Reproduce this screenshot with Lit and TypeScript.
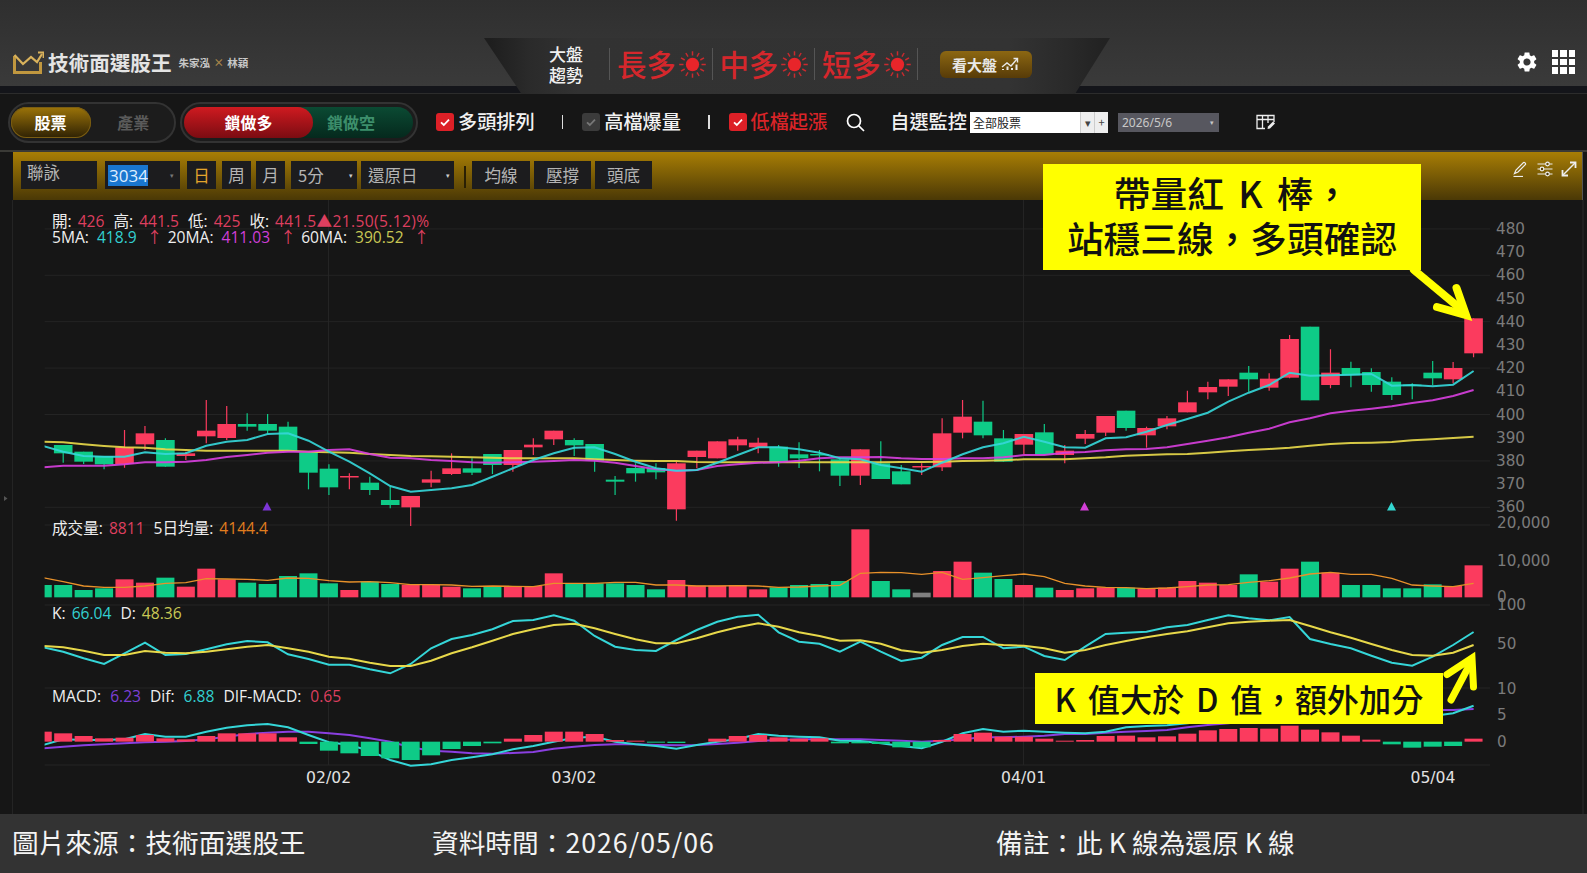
import { LitElement, html, svg, css } from "lit";
import { customElement } from "lit/decorators.js";

const RED = "#fb3b5e";
const GREEN = "#0ecb87";
const xAt = (i: number) => 63.2 + 20.44 * i;
const yOf = (y0: number) => (z: number) => y0 + z / 3;

// [color, wickTop, bodyTop, bodyBottom, wickBottom], values read per pane section
type Candle = ["r" | "g", number, number, number, number];
const candlesA: Candle[] = [
	["g", 735, 735, 760, 788], ["g", 755, 755, 785, 792], ["g", 768, 768, 793, 808], ["r", 690, 742, 792, 803],
	["r", 678, 700, 733, 750], ["g", 715, 720, 800, 800], ["r", 755, 760, 768, 780], ["r", 600, 692, 709, 730],
	["r", 618, 672, 714, 720], ["g", 640, 672, 680, 692], ["g", 642, 672, 692, 700], ["g", 665, 680, 752, 755],
	["g", 757, 757, 818, 868], ["g", 793, 806, 862, 885], ["r", 820, 828, 830, 868], ["g", 830, 848, 870, 885],
	["g", 860, 900, 915, 925], ["r", 888, 888, 922, 978], ["r", 812, 838, 848, 862], ["r", 760, 805, 822, 825],
	["g", 775, 805, 818, 825], ["g", 762, 762, 795, 822], ["r", 750, 750, 795, 815],
];
const candlesB: Candle[] = [
	["r", 325, 344, 352, 375], ["r", 302, 302, 328, 345], ["g", 325, 330, 346, 378], ["g", 342, 342, 392, 425],
	["g", 438, 449, 455, 495], ["g", 400, 414, 430, 455], ["g", 400, 414, 427, 448], ["r", 395, 400, 538, 572],
	["r", 362, 362, 381, 415], ["r", 334, 334, 385, 385], ["r", 320, 328, 346, 362], ["r", 323, 338, 352, 370],
	["g", 345, 350, 398, 410], ["g", 337, 373, 385, 414], ["g", 360, 372, 376, 424], ["g", 385, 388, 437, 468],
	["r", 358, 358, 437, 465], ["g", 334, 400, 447, 447], ["g", 405, 424, 463, 463], ["r", 400, 408, 410, 435],
	["r", 265, 310, 412, 423], ["r", 210, 260, 308, 325], ["g", 212, 275, 316, 325], ["g", 300, 325, 395, 395],
	["r", 312, 312, 344, 372], ["g", 282, 307, 375, 375],
];
const candlesC: Candle[] = [
	["r", 435, 452, 465, 490], ["r", 390, 402, 416, 432], ["r", 348, 348, 398, 408], ["g", 332, 332, 384, 392],
	["r", 380, 384, 406, 443], ["r", 348, 355, 379, 388], ["r", 272, 307, 337, 337], ["r", 245, 261, 277, 298],
	["r", 238, 238, 260, 288], ["g", 198, 218, 238, 275], ["r", 220, 236, 263, 272], ["r", 105, 117, 233, 235],
	["g", 80, 80, 301, 301], ["r", 148, 218, 255, 265], ["g", 185, 204, 226, 262], ["g", 205, 216, 255, 275],
	["g", 232, 245, 285, 300], ["g", 250, 254, 256, 298], ["g", 183, 218, 235, 256], ["r", 186, 204, 238, 250],
	["r", 55, 55, 160, 172],
];
const scaleCandles = (rows: Candle[], y0: number) => {
	const y = yOf(y0);
	return rows.map((c) => [c[0], y(c[1]), y(c[2]), y(c[3]), y(c[4])] as Candle);
};
const candles = [...scaleCandles(candlesA, 200), ...scaleCandles(candlesB, 330), ...scaleCandles(candlesC, 300)];

const priceLine = (a: number[], b: number[], c: number[]) => [...a.map(yOf(200)), ...b.map(yOf(330)), ...c.map(yOf(300))];

const ma5 = priceLine(
	[738, 755, 768, 770, 770, 757, 762, 760, 737, 725, 720, 702, 700, 722, 755, 785, 820, 858, 875, 870, 865, 855, 830, 805],
	[390, 370, 353, 352, 372, 395, 415, 422, 420, 398, 375, 352, 352, 358, 368, 385, 388, 405, 415, 425, 398, 373, 352, 340, 320, 335],
	[442, 443, 415, 412, 395, 375, 357, 338, 305, 278, 255, 218, 227, 226, 224, 222, 257, 255, 259, 254, 213],
);
const ma20 = priceLine(
	[802, 797, 797, 797, 793, 787, 787, 785, 780, 771, 765, 758, 755, 755, 750, 748, 762, 773, 775, 780, 783, 787, 788, 787],
	[395, 393, 390, 392, 398, 408, 418, 422, 420, 408, 403, 398, 397, 392, 385, 382, 382, 381, 385, 387, 387, 385, 385, 382, 375, 375],
	[458, 456, 451, 448, 447, 442, 432, 422, 412, 398, 386, 367, 355, 340, 332, 326, 319, 309, 301, 288, 270],
);
const ma60 = priceLine(
	[725, 727, 733, 738, 742, 743, 748, 750, 752, 752, 752, 752, 752, 755, 757, 758, 762, 765, 768, 769, 770, 772, 773, 775],
	[385, 385, 385, 388, 390, 392, 393, 393, 396, 397, 397, 397, 397, 397, 397, 397, 397, 397, 396, 396, 395, 393, 392, 391, 388, 388],
	[478, 475, 472, 467, 465, 463, 462, 458, 454, 450, 447, 443, 437, 432, 429, 428, 426, 421, 418, 414, 410],
);

const lower = yOf(510);
// volume tops from index -1, r/g/x colour
const volTops = [225, 225, 240, 235, 208, 218, 203, 230, 176, 208, 218, 222, 198, 190, 220, 240, 215, 222, 224, 224, 230, 235, 228, 228, 228, 190, 220, 220, 220, 225, 238, 210, 227, 227, 225, 238, 232, 225, 222, 213, 58, 213, 238, 248, 183, 155, 188, 207, 225, 233, 240, 235, 232, 233, 235, 233, 213, 218, 225, 193, 215, 176, 155, 188, 225, 225, 235, 235, 223, 228, 166];
const volColors = ["gggg", "rr", "g", "rrr", "ggggg", "r", "gg", "rrr", "gg", "rrr", "ggggg", "rrrrr", "gggg", "r", "gg", "x", "rr", "gg", "r", "g", "rrr", "g", "rrrrr", "g", "rr", "g", "r", "ggggg", "rr"].join("");
const volMa = [203, 215, 228, 232, 232, 228, 220, 218, 206, 207, 208, 211, 204, 205, 212, 216, 215, 218, 224, 224, 225, 229, 228, 229, 230, 220, 220, 220, 217, 217, 225, 225, 228, 228, 227, 228, 232, 231, 228, 226, 190, 187, 188, 193, 187, 208, 203, 197, 192, 200, 220, 228, 232, 233, 236, 234, 230, 225, 224, 217, 212, 204, 192, 187, 193, 193, 205, 225, 228, 230, 220];

const kLine = [412, 425, 445, 462, 430, 398, 435, 432, 418, 403, 393, 397, 433, 447, 464, 464, 478, 490, 462, 415, 387, 375, 358, 333, 330, 316, 332, 378, 410, 420, 423, 390, 360, 335, 320, 314, 367, 395, 401, 425, 395, 425, 453, 443, 405, 381, 381, 415, 410, 438, 450, 410, 372, 368, 365, 352, 345, 330, 316, 325, 331, 321, 387, 402, 415, 437, 458, 467, 440, 405, 366];
const dLine = [408, 412, 422, 435, 435, 423, 428, 430, 425, 418, 410, 405, 415, 425, 440, 446, 458, 468, 468, 452, 430, 412, 392, 372, 358, 345, 341, 355, 372, 388, 400, 400, 385, 367, 352, 340, 350, 367, 378, 392, 391, 401, 421, 428, 420, 408, 401, 405, 407, 415, 428, 420, 405, 393, 382, 372, 364, 352, 340, 335, 332, 330, 348, 367, 383, 402, 420, 435, 437, 428, 405];

const histZero = 695;
const hist = [665, 670, 678, 685, 683, 675, 685, 688, 678, 670, 670, 670, 682, 702, 722, 730, 738, 745, 750, 736, 717, 708, 700, 686, 675, 665, 665, 672, 690, 692, 698, 699, 695, 686, 678, 675, 682, 686, 685, 700, 700, 702, 712, 712, 690, 672, 668, 680, 680, 686, 692, 690, 678, 677, 682, 679, 671, 661, 657, 654, 656, 647, 659, 667, 677, 689, 703, 713, 710, 708, 686];
const difLine = [705, 688, 690, 690, 688, 672, 680, 680, 665, 653, 646, 642, 652, 675, 697, 705, 722, 750, 767, 763, 750, 742, 733, 718, 708, 695, 683, 680, 695, 703, 708, 716, 705, 695, 687, 672, 677, 680, 682, 692, 693, 700, 708, 715, 695, 670, 657, 665, 662, 665, 668, 670, 665, 652, 648, 646, 640, 632, 625, 620, 618, 620, 618, 620, 625, 630, 628, 625, 618, 610, 587];
const macdLine = [715, 710, 706, 703, 700, 697, 695, 693, 688, 680, 672, 668, 665, 665, 670, 675, 685, 695, 712, 722, 725, 730, 731, 729, 726, 716, 710, 705, 703, 703, 705, 706, 705, 702, 698, 693, 690, 688, 688, 688, 688, 690, 692, 695, 692, 688, 682, 682, 680, 677, 672, 672, 668, 665, 663, 660, 652, 645, 640, 632, 625, 620, 615, 612, 610, 608, 605, 603, 600, 600, 597];

const points = (ys: number[]) => ys.map((y, n) => `${xAt(n - 1).toFixed(1)},${y.toFixed(1)}`).join(" ");

const priceTicks = [480, 470, 460, 450, 440, 430, 420, 410, 400, 390, 380, 370, 360];
const priceY = (p: number) => 321.7 + (440 - p) * 2.32;
const gridY = [priceY(480), priceY(460), priceY(440), priceY(420), priceY(400), priceY(380), priceY(360), 525, 605, 688, 765];
const axisLabels: [string, number][] = [
	["20,000", 523], ["10,000", 561], ["0", 597], ["100", 605], ["50", 644], ["10", 689], ["5", 715], ["0", 742],
];
const dateLabels: [string, number][] = [["02/02", 328.6], ["03/02", 574], ["04/01", 1023.6], ["05/04", 1433]];

const sun = html`<svg class="sun" viewBox="0 0 24 24">
	<circle cx="12" cy="12" r="5.9" fill="#e8252a"></circle>
	${[0, 30, 60, 90, 120, 150, 180, 210, 240, 270, 300, 330].map(
		(a) => svg`<line x1="12" y1="4" x2="12" y2="0.2" stroke="#c92b2f" stroke-width="1.3" transform="rotate(${a} 12 12)"></line>`,
	)}
</svg>`;

const check = (on: boolean) => html`<svg class="check" viewBox="0 0 18 18">
	<rect width="18" height="18" rx="3" fill=${on ? "#dd2027" : "#3b3b3b"}></rect>
	<path d="M5 9.4l2.8 2.6L13 6.6" fill="none" stroke=${on ? "#fff" : "#777"} stroke-width="1.8"></path>
</svg>`;

@customElement("app-root")
export class AppRoot extends LitElement {
	static override styles = css`
		:host {
			display: block;
			position: relative;
			width: 1587px;
			height: 873px;
			overflow: hidden;
			background: #161616;
			font-family: "Noto Sans CJK TC", "Noto Sans", sans-serif;
			color: #fff;
		}
		.header {
			height: 86px;
			display: grid;
			grid-template-columns: 484px 626px 1fr;
			background: linear-gradient(#2f2f2f, #3a3a3a);
			box-sizing: border-box;
			padding-top: 38px;
		}
		.brand {
			display: flex;
			align-items: center;
			padding: 0 0 0 13px;
			height: 48px;
		}
		.brand svg {
			width: 31px;
			height: 23px;
			margin-right: 4px;
		}
		.brand b {
			font-size: 20.6px;
			font-weight: 700;
			color: #e4e4e4;
		}
		.brand small {
			font-size: 10.5px;
			font-weight: 700;
			color: #c8c8c8;
			margin-left: 7px;
			word-spacing: 1px;
		}
		.brand small i {
			font-style: normal;
			color: #a8854a;
		}
		.trend {
			height: 56px;
			clip-path: polygon(0 0, 100% 0, 94.4% 100%, 6% 100%);
			background: linear-gradient(90deg, #1e1e1e 1%, #2a2a2a 7%, #323232 15%, #333 84%, #2a2a2a 93%, #222 99%);
			display: flex;
			align-items: center;
			padding: 0 0 4px 65px;
			box-sizing: border-box;
		}
		.trend-title {
			font-size: 17px;
			line-height: 21px;
			width: 60px;
			font-weight: 500;
			color: #f0f0f0;
		}
		.trend-item {
			display: flex;
			align-items: center;
			height: 32px;
			font-size: 29.5px;
			font-weight: 500;
			color: #d5272c;
			border-left: 1px solid #555;
			padding: 0 6px 0 7px;
			gap: 2.5px;
			line-height: 1;
		}
		.trend-item.last {
			border-right: 1px solid #555;
		}
		.sun {
			width: 27px;
			height: 27px;
		}
		.market-btn {
			margin-left: 22px;
			width: 92px;
			height: 27px;
			border-radius: 6px;
			background: linear-gradient(#8c6712, #573b08);
			display: flex;
			align-items: center;
			justify-content: center;
			gap: 4px;
			font-size: 15px;
			font-weight: 700;
			color: #e8e8e8;
		}
		.market-btn svg {
			width: 18px;
			height: 14px;
		}
		.head-right {
			display: flex;
			align-items: center;
			justify-content: flex-end;
			gap: 13px;
			height: 48px;
			padding-right: 12px;
		}
		.gear {
			width: 24px;
			height: 24px;
		}
		.apps {
			display: grid;
			grid-template-columns: repeat(3, 6.5px);
			grid-auto-rows: 6.5px;
			gap: 2px;
		}
		.apps span {
			background: #fff;
		}
		.band {
			height: 8px;
			background: #14151a;
			border-bottom: 1px solid #2c2c2c;
			box-sizing: border-box;
		}
		.toolbar {
			height: 56px;
			display: flex;
			align-items: center;
			padding-left: 7.5px;
			background: #161616;
			border-bottom: 2px solid #3a3a36;
			box-sizing: content-box;
		}
		.pill {
			display: flex;
			height: 41px;
			box-sizing: border-box;
			padding: 3px;
			border-radius: 21px;
			background: #1c1c1c;
			border: 2px solid #333;
			font-size: 16px;
			font-weight: 700;
		}
		.pill span {
			display: flex;
			align-items: center;
			justify-content: center;
		}
		.p1 {
			width: 168.5px;
		}
		.p1 .on {
			width: 80px;
			border-radius: 18px;
			background: linear-gradient(#9c7409, #2e2104);
			box-shadow: inset 0 0 0 1px #7a5d12;
			margin-left: -2px;
		}
		.p1 .off {
			flex: 1;
			color: #5a5a5a;
			padding-left: 5px;
		}
		.p2 {
			width: 238px;
			margin-left: 4px;
		}
		.p2 .on {
			width: 129px;
			border-radius: 18px;
			background: linear-gradient(#cf1a20, #7b0c12);
			position: relative;
			z-index: 1;
			margin-left: -1px;
		}
		.p2 .off {
			flex: 1;
			margin-left: -18px;
			padding: 0 24px 0 18px;
			border-radius: 0 18px 18px 0;
			background: linear-gradient(#0b4a33, #05291d);
			color: #3d8f6c;
		}
		.opt {
			display: flex;
			align-items: center;
			gap: 4px;
			font-size: 19.2px;
			font-weight: 500;
			white-space: nowrap;
			color: #f2f2f2;
			padding-bottom: 2px;
		}
		.opt.first {
			margin-left: 18px;
		}
		.opt.hot {
			color: #d92428;
		}
		.check {
			width: 18px;
			height: 18px;
			margin-top: 2px;
		}
		.sep {
			width: 1.5px;
			height: 14px;
			background: #ddd;
			margin: 0 19px 0 27px;
		}
		.search {
			width: 19px;
			height: 19px;
			margin-left: 19px;
		}
		.watch {
			margin-left: 25px;
		}
		.select {
			margin-left: 3px;
			width: 138px;
			height: 21px;
			background: #fff;
			color: #222;
			font-size: 12px;
			display: flex;
			align-items: center;
			padding-left: 3px;
			box-sizing: border-box;
		}
		.select b {
			font-weight: 400;
			flex: 1;
		}
		.select em {
			width: 13px;
			height: 21px;
			background: #eee;
			border-left: 1px solid #ccc;
			color: #444;
			font-style: normal;
			font-size: 11px;
			line-height: 21px;
			text-align: center;
		}
		.date {
			margin-left: 10px;
			width: 101px;
			height: 19px;
			background: #57575f;
			color: #c8c8c8;
			font-family: "Noto Sans", sans-serif;
			font-size: 12px;
			display: flex;
			align-items: center;
			justify-content: space-between;
			padding: 0 5px 0 4px;
			box-sizing: border-box;
		}
		.date em {
			font-style: normal;
			font-size: 7px;
		}
		.table-edit {
			width: 20px;
			height: 16px;
			margin-left: 37px;
		}
		.goldbar {
			height: 48px;
			margin: 0 4px 0 13px;
			background: linear-gradient(#a87e05, #4a3806);
			border-right: 1px solid #555;
			display: flex;
			align-items: flex-start;
			padding: 9px 0 0 8px;
			box-sizing: border-box;
			font-size: 16.5px;
			color: #b4b4b4;
			position: relative;
		}
		.ctl {
			height: 28px;
			background: #1c1c1e;
			display: flex;
			align-items: center;
			justify-content: center;
			box-sizing: border-box;
			margin-left: 6px;
			width: 29px;
			line-height: 1;
		}
		.ctl.name {
			margin-left: 0;
			width: 76px;
			justify-content: flex-start;
			padding: 0 0 6px 6px;
		}
		.ctl.code {
			margin-left: 8px;
			width: 75px;
			justify-content: space-between;
			padding: 0 6px 0 3px;
			font-family: "Open Sans", sans-serif;
			font-size: 17px;
		}
		.ctl.code span {
			background: #1976cf;
			color: #dfeeff;
			padding: 2px 1px;
			width: 40px;
			box-sizing: border-box;
		}
		.ctl.code em,
		.ctl.drop em {
			font-style: normal;
			font-size: 7px;
			color: #777;
		}
		.ctl.drop em {
			color: #ccc;
		}
		.ctl.today {
			margin-left: 7px;
			color: #e3a52c;
		}
		.ctl.month {
			margin-left: 5px;
		}
		.ctl.drop {
			justify-content: space-between;
			padding: 0 4px 0 7px;
			width: 66px;
		}
		.ctl.drop.wide {
			width: 93px;
			margin-left: 4px;
		}
		.tick {
			width: 2px;
			height: 22px;
			margin: 5px 6px 0 10px;
			background: #2a2004;
		}
		.ctl.tool {
			width: 57px;
			margin-left: 4px;
		}
		.ctl.tool.start {
			width: 58px;
			margin-left: 0;
		}
		.bar-icons {
			position: absolute;
			right: 5px;
			top: 9px;
			display: flex;
			gap: 8px;
		}
		.bar-icons svg {
			width: 16px;
			height: 16px;
		}
		.chart {
			position: relative;
			height: 614px;
		}
		.chart > svg {
			display: block;
			width: 1587px;
			height: 614px;
		}
		.legend {
			position: absolute;
			left: 52px;
			font-family: "Open Sans", "Noto Sans CJK TC", sans-serif;
			font-size: 15.6px;
			line-height: 16px;
			white-space: nowrap;
			color: #eee;
			display: flex;
		}
		.legend span {
			margin-right: 9px;
			display: flex;
		}
		.legend i {
			font-style: normal;
			margin-left: 6px;
		}
		.legend .red {
			color: #dd3f5f;
		}
		.legend .cy {
			color: #33cfd0;
		}
		.legend .mg {
			color: #cf3fd6;
		}
		.legend .yl {
			color: #c9c855;
		}
		.legend .or {
			color: #e07d1e;
		}
		.legend .pu {
			color: #7d3fd6;
		}
		.legend .change {
			letter-spacing: 0.35px;
		}
		.lg-open {
			top: 13px;
		}
		.lg-ma {
			top: 29px;
		}
		.lg-ma span {
			margin-right: 11px;
		}
		.lg-ma i {
			margin-left: 8px;
		}
		.legend .up {
			margin-left: 10px;
			width: 10px;
			text-align: center;
			color: #dd3f5f;
		}
		.lg-vol {
			top: 320px;
		}
		.lg-kd {
			top: 405px;
		}
		.lg-macd {
			top: 488px;
		}
		.lg-macd i {
			margin-left: 9px;
		}
		.footer {
			height: 59px;
			background: #333;
			display: grid;
			grid-template-columns: 420px 564px 1fr;
			align-items: center;
			padding: 0 0 4px 12px;
			box-sizing: border-box;
			font-size: 26.7px;
			font-weight: 400;
			color: #f4f4f4;
			white-space: nowrap;
		}
		.footer span {
			letter-spacing: 1px;
		}
		.callout {
			position: absolute;
			background: #ffff00;
			color: #111;
			font-weight: 500;
			display: flex;
			align-items: center;
			justify-content: center;
			text-align: center;
			box-sizing: border-box;
		}
		.c1 {
			left: 1043px;
			top: 164px;
			width: 378px;
			height: 106px;
			padding-bottom: 4px;
			font-size: 36.7px;
			line-height: 45px;
			word-spacing: 6px;
		}
		.c2 {
			left: 1035px;
			top: 673px;
			width: 408px;
			height: 51px;
			padding-bottom: 2px;
			font-size: 32.2px;
			word-spacing: 4.5px;
		}
	`;

	private renderChart() {
		return svg`
			<defs><clipPath id="plot"><rect x="44.6" y="200" width="1446" height="570"></rect></clipPath></defs>
			<line x1="12.5" y1="200" x2="12.5" y2="815" stroke="#242424"></line>
			<path d="M4 496l3.5 2.5L4 501z" fill="#555"></path>
			<line x1="1583" y1="200" x2="1583" y2="815" stroke="#2a2a2a"></line>
			${gridY.map((y) => svg`<line x1="44.6" x2="1490" y1=${y} y2=${y} stroke="#242424"></line>`)}
			${[328.6, 1023.6].map((x) => svg`<line x1=${x} x2=${x} y1="200" y2="765" stroke="#262626"></line>`)}
			<g clip-path="url(#plot)">
				${candles.map((c, i) => {
					const x = xAt(i);
					const fill = c[0] === "r" ? RED : GREEN;
					return svg`<line x1=${x} x2=${x} y1=${c[1]} y2=${c[4]} stroke=${fill} stroke-width="1.2"></line>
						<rect x=${x - 9.3} y=${c[2]} width="18.6" height=${Math.max(c[3] - c[2], 1.5)} fill=${fill}></rect>`;
				})}
				<polyline points=${points(ma60)} fill="none" stroke="#e7d84a" stroke-width="2" stroke-opacity=".92"></polyline>
				<polyline points=${points(ma20)} fill="none" stroke="#d63fdc" stroke-width="2" stroke-opacity=".92"></polyline>
				<polyline points=${points(ma5)} fill="none" stroke="#35d6d8" stroke-width="2" stroke-opacity=".92"></polyline>
				${volTops.map((t, n) => {
					const x = xAt(n - 1);
					const k = volColors[n];
					const fill = k === "r" ? RED : k === "x" ? "#808080" : GREEN;
					return svg`<rect x=${x - 9} y=${lower(t)} width="18" height=${lower(262) - lower(t)} fill=${fill}></rect>`;
				})}
				<polyline points=${points(volMa.map(lower))} fill="none" stroke="#e8912a" stroke-width="1.3"></polyline>
				<polyline points=${points(kLine.map(lower))} fill="none" stroke="#35d6d8" stroke-width="2"></polyline>
				<polyline points=${points(dLine.map(lower))} fill="none" stroke="#e7d84a" stroke-width="2"></polyline>
				<polyline points=${points(macdLine.map(lower))} fill="none" stroke="#8a3fe0" stroke-width="2"></polyline>
				<polyline points=${points(difLine.map(lower))} fill="none" stroke="#35d6d8" stroke-width="2"></polyline>
				${hist.map((h, n) => {
					const x = xAt(n - 1);
					const up = h < histZero;
					const top = lower(Math.min(h, histZero));
					const height = Math.abs(lower(h) - lower(histZero));
					return svg`<rect x=${x - 9} y=${top} width="18" height=${height} fill=${up ? RED : GREEN}></rect>`;
				})}
			</g>
			<path d="M267 502l4.5 8.5h-9z" fill="#7d35d8"></path>
			<path d="M1084.5 502l4.5 8.5h-9z" fill="#d23fd6"></path>
			<path d="M1391.5 502l4.5 8.5h-9z" fill="#33d6d0"></path>
			<g font-family="DejaVu Sans, sans-serif" font-size="15.2" fill="#7b7b7b" dominant-baseline="central">
				${priceTicks.map((p) => svg`<text x="1496" y=${priceY(p)}>${p}</text>`)}
				${axisLabels.map(([t, y]) => svg`<text x="1497" y=${y}>${t}</text>`)}
			</g>
			<g font-family="DejaVu Sans, sans-serif" font-size="15.6" fill="#e2e2e2" text-anchor="middle" dominant-baseline="central">
				${dateLabels.map(([t, x]) => svg`<text x=${x} y="777.7">${t}</text>`)}
			</g>
			<g fill="none" stroke="#ffff00" stroke-linejoin="miter" stroke-linecap="round">
				<path d="M1414 270L1462 310" stroke-width="8"></path>
				<path d="M1437 307L1466 315L1456.5 288" stroke-width="8"></path>
				<path d="M1451 700L1470 664" stroke-width="7"></path>
				<path d="M1447 674.5L1472 658L1473.5 687" stroke-width="7"></path>
			</g>
		`;
	}

	override render() {
		return html`
			<div class="header">
				<div class="brand">
					<svg viewBox="0 0 31 23" fill="none" stroke="#c0973f" stroke-width="3">
						<path d="M1.5 5V21.5H27.5V11"></path>
						<path d="M1.5 4L10 13L18 6L24 11L29 3" stroke="#d9b25c" stroke-width="2.2"></path>
						<path d="M25 1.5H30.5V7" stroke="#d9b25c" stroke-width="1.8"></path>
					</svg>
					<b>技術面選股王</b>
					<small>朱家泓 <i>×</i> 林穎</small>
				</div>
				<div class="trend">
					<div class="trend-title">大盤<br />趨勢</div>
					<div class="trend-item">長多${sun}</div>
					<div class="trend-item">中多${sun}</div>
					<div class="trend-item last">短多${sun}</div>
					<div class="market-btn">
						看大盤
						<svg viewBox="0 0 18 14" fill="none" stroke="#e8e8e8" stroke-width="1.4">
							<path d="M1 10L6 6L10 9L16 2"></path>
							<path d="M12.5 1.5H16.5V5.5"></path>
							<path d="M2 13V12M6.5 13V9.5M11 13V11M15.5 13V7.5" stroke-width="2"></path>
						</svg>
					</div>
				</div>
				<div class="head-right">
					<svg class="gear" viewBox="0 0 24 24" fill="#fff">
						<path
							d="M19.14 12.94c.04-.3.06-.61.06-.94 0-.32-.02-.64-.07-.94l2.03-1.58c.18-.14.23-.41.12-.61l-1.92-3.32c-.12-.22-.37-.29-.59-.22l-2.39.96c-.5-.38-1.03-.7-1.62-.94l-.36-2.54c-.04-.24-.24-.41-.48-.41h-3.84c-.24 0-.43.17-.47.41l-.36 2.54c-.59.24-1.13.57-1.62.94l-2.39-.96c-.22-.08-.47 0-.59.22L2.74 8.87c-.12.21-.08.47.12.61l2.03 1.58c-.05.3-.09.63-.09.94s.02.64.07.94l-2.03 1.58c-.18.14-.23.41-.12.61l1.92 3.32c.12.22.37.29.59.22l2.39-.96c.5.38 1.03.7 1.62.94l.36 2.54c.05.24.24.41.48.41h3.84c.24 0 .44-.17.47-.41l.36-2.54c.59-.24 1.13-.56 1.62-.94l2.39.96c.22.08.47 0 .59-.22l1.92-3.32c.12-.22.07-.47-.12-.61l-2.01-1.58zM12 15.6c-1.98 0-3.6-1.62-3.6-3.6s1.62-3.6 3.6-3.6 3.6 1.62 3.6 3.6-1.62 3.6-3.6 3.6z"
						></path>
					</svg>
					<div class="apps">${Array.from({ length: 9 }, () => html`<span></span>`)}</div>
				</div>
			</div>
			<div class="band"></div>
			<div class="toolbar">
				<div class="pill p1"><span class="on">股票</span><span class="off">產業</span></div>
				<div class="pill p2"><span class="on">鎖做多</span><span class="off">鎖做空</span></div>
				<div class="opt first">${check(true)}多頭排列</div>
				<div class="sep"></div>
				<div class="opt">${check(false)}高檔爆量</div>
				<div class="sep"></div>
				<div class="opt hot">${check(true)}低檔起漲</div>
				<svg class="search" viewBox="0 0 19 19" fill="none" stroke="#fff" stroke-width="1.7">
					<circle cx="8" cy="8" r="6.5"></circle>
					<path d="M12.8 12.8L18 18"></path>
				</svg>
				<div class="opt watch">自選監控</div>
				<div class="select"><b>全部股票</b><em>▾</em><em>+</em></div>
				<div class="date">2026/5/6<em>▾</em></div>
				<svg class="table-edit" viewBox="0 0 20 16" fill="none" stroke="#eee" stroke-width="1.3">
					<path d="M9 14.5H1V1.5H18V8"></path>
					<path d="M1 5.5H18M6.5 1.5V14.5M12 1.5V9"></path>
					<path d="M11.5 15L12 12.5L17 7.5L19 9.5L14 14.5Z" fill="#eee" stroke="none"></path>
				</svg>
			</div>
			<div class="goldbar">
				<div class="ctl name">聯詠</div>
				<div class="ctl code"><span>3034</span><em>▾</em></div>
				<div class="ctl today">日</div>
				<div class="ctl">周</div>
				<div class="ctl month">月</div>
				<div class="ctl drop">5分<em>▾</em></div>
				<div class="ctl drop wide">還原日<em>▾</em></div>
				<div class="tick"></div>
				<div class="ctl tool start">均線</div>
				<div class="ctl tool">壓撐</div>
				<div class="ctl tool">頭底</div>
				<div class="bar-icons">
					<svg viewBox="0 0 16 16" fill="none" stroke="#eee" stroke-width="1.2">
						<path d="M1.5 12.5L3 9L10.5 1.5C11.5 1 13 2.5 12.5 3.5L5 11Z"></path>
						<path d="M0.5 15.5H10"></path>
					</svg>
					<svg viewBox="0 0 16 16" fill="none" stroke="#eee" stroke-width="1.2">
						<path d="M0.5 3H15.5M0.5 8H15.5M0.5 13H15.5"></path>
						<circle cx="10.5" cy="3" r="1.8" fill="#6b5008"></circle>
						<circle cx="5" cy="8" r="1.8" fill="#5a4307"></circle>
						<circle cx="10.5" cy="13" r="1.8" fill="#4a3706"></circle>
					</svg>
					<svg viewBox="0 0 16 16" fill="none" stroke="#eee" stroke-width="1.5">
						<path d="M2 14L14 2"></path>
						<path d="M9 1.5H14.5V7M1.5 9V14.5H7" stroke-width="1.8"></path>
					</svg>
				</div>
			</div>
			<div class="chart">
				<svg viewBox="0 200 1587 614">${this.renderChart()}</svg>
				<div class="legend lg-open">
					<span>開:<i class="red">426</i></span>
					<span>高:<i class="red">441.5</i></span>
					<span>低:<i class="red">425</i></span>
					<span>收:<i class="red change">441.5▲21.50(5.12)%</i></span>
				</div>
				<div class="legend lg-ma">
					<span>5MA:<i class="cy">418.9</i><i class="up">↑</i></span>
					<span>20MA:<i class="mg">411.03</i><i class="up">↑</i></span>
					<span>60MA:<i class="yl">390.52</i><i class="up">↑</i></span>
				</div>
				<div class="legend lg-vol">
					<span>成交量:<i class="red">8811</i></span>
					<span>5日均量:<i class="or">4144.4</i></span>
				</div>
				<div class="legend lg-kd">
					<span>K:<i class="cy">66.04</i></span>
					<span>D:<i class="yl">48.36</i></span>
				</div>
				<div class="legend lg-macd">
					<span>MACD:<i class="pu">6.23</i></span>
					<span>Dif:<i class="cy">6.88</i></span>
					<span>DIF-MACD:<i class="red">0.65</i></span>
				</div>
			</div>
			<div class="footer">
				<div>圖片來源：技術面選股王</div>
				<div>資料時間：<span>2026/05/06</span></div>
				<div>備註：此 K 線為還原 K 線</div>
			</div>
			<div class="callout c1">帶量紅 K 棒，<br />站穩三線，多頭確認</div>
			<div class="callout c2">K 值大於 D 值，額外加分</div>
		`;
	}
}
